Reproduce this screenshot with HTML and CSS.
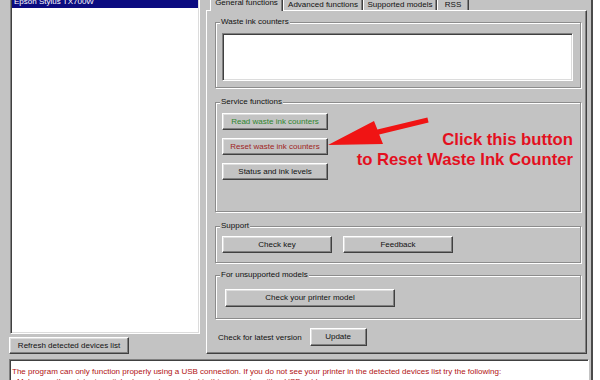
FILE: index.html
```html
<!DOCTYPE html>
<html lang="en">
<head>
    <meta charset="UTF-8">
    <title>Printer Service Utility</title>
    <link rel="stylesheet" href="styles.css">
</head>
<body>
    <div class="window">
        <div class="main">
            <!-- Detected devices -->
            <div class="devices">
                <div class="listbox">
                    <div class="list-item selected">Epson Stylus TX700W</div>
                </div>
                <button class="btn refresh">Refresh detected devices list</button>
            </div>

            <!-- Tabs -->
            <div class="tabs">
                <div class="tab-strip">
                    <div class="tab active tab-general">General functions</div>
                    <div class="tab tab-advanced">Advanced functions</div>
                    <div class="tab tab-models">Supported models</div>
                    <div class="tab tab-rss">RSS</div>
                </div>
                <div class="tab-panel">
                    <div class="group group-counters">
                        <div class="group-title">Waste ink counters</div>
                        <div class="textbox"></div>
                    </div>

                    <div class="group group-service">
                        <div class="group-title">Service functions</div>
                        <button class="btn btn-service read">Read waste ink counters</button>
                        <button class="btn btn-service reset">Reset waste ink counters</button>
                        <button class="btn btn-service">Status and ink levels</button>

                        <!-- Annotation drawn over the screenshot -->
                        <svg class="callout-arrow" width="366" height="108" viewBox="0 0 366 108">
                            <polygon points="112,42 158,18 161.4,26.6 211.4,14.6 212.6,19.4 163.2,31.4 167,41" fill="#f01414"/>
                        </svg>
                        <div class="callout">Click this button<br>to Reset Waste Ink Counter</div>
                    </div>

                    <div class="group group-support">
                        <div class="group-title">Support</div>
                        <div class="btn-row">
                            <button class="btn btn-support">Check key</button>
                            <button class="btn btn-support">Feedback</button>
                        </div>
                    </div>

                    <div class="group group-unsupported">
                        <div class="group-title">For unsupported models</div>
                        <button class="btn btn-model">Check your printer model</button>
                    </div>

                    <div class="update-row">
                        <span class="update-label">Check for latest version</span>
                        <button class="btn btn-update">Update</button>
                    </div>
                </div>
            </div>
        </div>

        <!-- Help message -->
        <div class="message">
            <p>The program can only function properly using a USB connection. If you do not see your printer in the detected devices list try the following:</p>
            <p>- Make sure the printer is switched on and connected to this computer with a USB cable.</p>
        </div>
    </div>
</body>
</html>
```

FILE: styles.css
```css
:root {
    --face: #c3c3c3;
    --light: #ffffff;
    --shade: #808080;
    --dark: #404040;
    --select: #0b0b80;
    --msg-red: #b01212;
    --note-red: #e3101f;
}

* {
    margin: 0;
    padding: 0;
    box-sizing: border-box;
}

body {
    background: #fff;
    font-family: "Liberation Sans", Arial, sans-serif;
    font-size: 8px;
    color: #111;
    overflow: hidden;
}

.window {
    width: 593px;
    height: 400px;
    margin-top: -7px;
    background: var(--face);
    border-right: 2px solid #4a4a4a;
}

.main {
    display: flex;
    height: 361px;
}

/* Left column */
.devices {
    width: 204px;
    padding-left: 10px;
    display: flex;
    flex-direction: column;
    gap: 3px;
}

.listbox {
    width: 190px;
    flex: 1;
    background: #fff;
    border: 1px solid;
    border-color: var(--shade) var(--light) var(--light) var(--shade);
    box-shadow: inset 1px 1px 0 var(--dark), inset -1px -1px 0 #dcdcdc;
    padding: 2px 1px;
}

.list-item {
    line-height: 12px;
    height: 12px;
    padding-left: 2px;
}

.list-item.selected {
    background: var(--select);
    color: #fff;
}

/* Buttons */
.btn {
    font-family: inherit;
    font-size: 8px;
    color: #111;
    background: var(--face);
    border: 1px solid;
    border-color: var(--light) var(--dark) var(--dark) var(--light);
    box-shadow: inset -1px -1px 0 var(--shade), inset 1px 1px 0 #dedede;
    height: 17px;
    line-height: 14px;
    text-align: center;
    cursor: pointer;
}

.refresh {
    width: 120px;
    margin-left: -1px;
}

/* Tabs */
.tabs {
    width: 381px;
    margin-left: 2px;
    display: flex;
    flex-direction: column;
}

.tab-strip {
    height: 17px;
    padding-left: 4px;
    display: flex;
    align-items: flex-end;
}

.tab {
    height: 13px;
    padding-top: 2px;
    line-height: 10px;
    text-align: center;
    border-top: 1px solid var(--light);
    border-left: 1px solid var(--light);
    border-right: 1px solid var(--dark);
    box-shadow: inset -1px 0 0 var(--shade);
    white-space: nowrap;
}

.tab.active {
    height: 17px;
    padding-top: 3px;
    margin-bottom: -1px;
    position: relative;
    z-index: 1;
    background: var(--face);
}

.tab-general { width: 73px; }
.tab-advanced { width: 80px; }
.tab-models { width: 74px; }
.tab-rss { width: 32px; }

.tab-panel {
    height: 344px;
    border: 1px solid;
    border-color: var(--light) var(--dark) var(--dark) var(--light);
    box-shadow: inset -1px -1px 0 var(--shade);
    padding: 0 5px 0 8px;
    display: flex;
    flex-direction: column;
}

/* Group boxes */
.group {
    position: relative;
    border: 1px solid #8c8c8c;
    box-shadow: 1px 1px 0 var(--light), inset 1px 1px 0 var(--light);
    display: flex;
    flex-direction: column;
    align-items: flex-start;
}

.group-title {
    margin: -6px 0 0 4px;
    padding: 0 1px;
    line-height: 10px;
    background: var(--face);
}

.group-counters {
    height: 66px;
    margin-top: 11px;
}

.textbox {
    width: 351px;
    height: 48px;
    margin: 6px 0 0 6px;
    background: #fff;
    border: 1px solid;
    border-color: var(--shade) var(--light) var(--light) var(--shade);
    box-shadow: inset 1px 1px 0 var(--dark), inset -1px -1px 0 #dcdcdc;
}

.group-service {
    height: 110px;
    margin-top: 14px;
}

.btn-service {
    width: 106px;
    margin: 8px 0 0 6px;
}

.btn-service.read {
    margin-top: 6px;
    color: #2f862f;
}

.btn-service.reset {
    color: #a02424;
}

.callout-arrow {
    position: absolute;
    left: 0;
    top: 0;
}

.callout {
    position: absolute;
    top: 27px;
    right: 7px;
    text-align: right;
    font-size: 16.7px;
    font-weight: bold;
    line-height: 20px;
    color: var(--note-red);
    white-space: nowrap;
}

.group-support {
    height: 37px;
    margin-top: 14px;
}

.btn-row {
    display: flex;
    gap: 11px;
    margin: 5px 0 0 6px;
}

.btn-support {
    width: 110px;
}

.group-unsupported {
    height: 44px;
    margin-top: 12px;
}

.btn-model {
    width: 170px;
    height: 18px;
    margin: 9px 0 0 9px;
}

.update-row {
    display: flex;
    align-items: center;
    gap: 8px;
    margin: 9px 0 0 3px;
}

.btn-update {
    width: 57px;
    height: 18px;
}

/* Bottom message */
.message {
    margin: 5px 2px 0 9px;
    height: 40px;
    background: #fff;
    border: 1px solid;
    border-color: var(--shade) var(--light) var(--light) var(--shade);
    box-shadow: inset 1px 1px 0 var(--dark);
    padding: 7px 3px 0 2px;
    color: var(--msg-red);
    line-height: 10px;
    white-space: nowrap;
}
```
